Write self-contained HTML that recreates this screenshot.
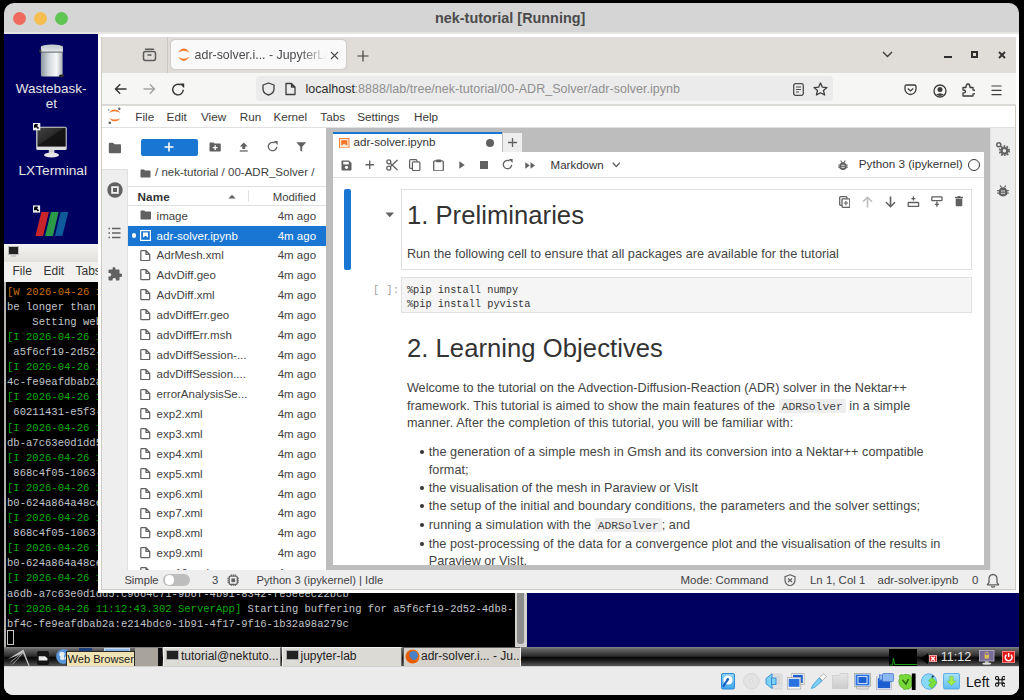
<!DOCTYPE html><html><head><meta charset="utf-8"><style>
html,body{margin:0;padding:0;width:1024px;height:700px;overflow:hidden;background:#000;}
body div, body span, body svg{position:absolute;box-sizing:border-box;}
span{white-space:pre;}
</style></head><body>
<div style="left:4px;top:3px;width:1015px;height:692px;background:#d5d5d5;border-radius:10px 10px 9px 9px;"></div>
<div style="left:12.5px;top:12px;width:13px;height:13px;background:#ee6a5f;border-radius:50%;"></div>
<div style="left:33.5px;top:12px;width:13px;height:13px;background:#f5bf4f;border-radius:50%;"></div>
<div style="left:54.5px;top:12px;width:13px;height:13px;background:#61c554;border-radius:50%;"></div>
<span style="left:435px;top:9px;font-family:'Liberation Sans';font-size:14.4px;line-height:18px;color:#4b4b4b;font-weight:bold;letter-spacing:0px;">nek-tutorial [Running]</span>
<div style="left:4px;top:32px;width:1015px;height:2px;background:#e7e5e0;"></div>
<div style="left:4px;top:33.5px;width:1015px;height:614px;background:#000060;"></div>
<div style="left:4px;top:666px;width:1015px;height:29px;background:#ebebeb;border-radius:0 0 9px 9px;"></div>
<svg style="left:38px;top:43px;" width="28" height="35" viewBox="0 0 28 35"><defs><linearGradient id="wb" x1="0" x2="1"><stop offset="0" stop-color="#8c969d"/><stop offset="0.35" stop-color="#d0d6da"/><stop offset="0.72" stop-color="#f7f8f9"/><stop offset="1" stop-color="#a9b1b6"/></linearGradient>
    <linearGradient id="wl" x1="0" y1="0" x2="0" y2="1"><stop offset="0" stop-color="#c4ccd1"/><stop offset="1" stop-color="#e6eaed"/></linearGradient></defs>
    <rect x="2.9" y="8" width="21.7" height="25.6" rx="1.5" fill="url(#wb)"/>
    <ellipse cx="13.9" cy="3.6" rx="11" ry="2" fill="#c8d0d5"/>
    <rect x="2.9" y="3.6" width="22" height="5.6" fill="url(#wl)"/>
    <rect x="2.9" y="8.6" width="22" height="1" fill="#5a6268"/>
    <rect x="1.3" y="6.6" width="2" height="2.8" fill="#3a3a3a"/>
    <ellipse cx="23.6" cy="32.9" rx="2.8" ry="1.3" fill="#2a2a2a"/></svg>
<span style="left:15.8px;top:80px;font-family:'Liberation Sans';font-size:13.5px;line-height:17px;color:#e6e6e6;font-weight:normal;letter-spacing:0px;">Wastebask-</span>
<span style="left:45.7px;top:95px;font-family:'Liberation Sans';font-size:13.5px;line-height:17px;color:#e6e6e6;font-weight:normal;letter-spacing:0px;">et</span>
<svg style="left:33px;top:122px;" width="36" height="37" viewBox="0 0 36 37"><defs><linearGradient id="mg" x1="0" y1="0" x2="1" y2="1"><stop offset="0" stop-color="#444"/><stop offset="0.45" stop-color="#2a2a2a"/><stop offset="0.5" stop-color="#151515"/><stop offset="1" stop-color="#111"/></linearGradient></defs>
    <rect x="3.2" y="4.8" width="30.5" height="23.3" rx="1.5" fill="#dedede"/>
    <rect x="4.4" y="5.7" width="28.3" height="18.9" fill="url(#mg)"/>
    <rect x="15.8" y="28" width="5.6" height="3.3" fill="#cfcfcf"/>
    <ellipse cx="18.5" cy="33" rx="7.5" ry="2.6" fill="#e6e6e6"/>
    <rect x="0" y="1" width="7.3" height="7.3" fill="#eee"/><path d="M2 3 L5.5 6.5 M1.8 2.8 h3 M1.8 2.8 v3" stroke="#000" stroke-width="1.6" fill="none"/></svg>
<span style="left:18.5px;top:162px;font-family:'Liberation Sans';font-size:13.7px;line-height:17px;color:#e6e6e6;font-weight:normal;letter-spacing:0px;">LXTerminal</span>
<svg style="left:33px;top:205px;" width="38" height="33" viewBox="0 0 38 33"><path d="M8.4 7 L15.9 7 L10.1 31 L2.4 31 Z" fill="#c8252a"/>
    <path d="M17.9 7 L25.6 7 L19.9 31 L12.1 31 Z" fill="#2a9a48"/>
    <path d="M27.6 7 L35.3 7 L29.3 31 L21.9 31 Z" fill="#0e5a9a"/>
    <rect x="0" y="0.4" width="7.1" height="7.2" fill="#eee"/><path d="M2 2.4 L5.5 5.9 M1.8 2.2 h3 M1.8 2.2 v3" stroke="#000" stroke-width="1.6" fill="none"/></svg>
<div style="left:4px;top:243.5px;width:523px;height:404px;background:#d6d4d0;"></div>
<div style="left:4px;top:243.5px;width:523px;height:18px;background:linear-gradient(#f4f3f1,#e2e0dc);"></div>
<svg style="left:8px;top:246px;" width="12" height="12" viewBox="0 0 12 12"><rect x="0.5" y="0.5" width="10" height="8" fill="#222" stroke="#bbb"/><rect x="3" y="9" width="5" height="2" fill="#ccc"/></svg>
<div style="left:4px;top:261.5px;width:523px;height:20.5px;background:#f2f1f0;"></div>
<span style="left:12.5px;top:264px;font-family:'Liberation Sans';font-size:12px;line-height:15px;color:#333;font-weight:normal;letter-spacing:0px;">File</span>
<span style="left:43.5px;top:264px;font-family:'Liberation Sans';font-size:12px;line-height:15px;color:#333;font-weight:normal;letter-spacing:0px;">Edit</span>
<span style="left:75.5px;top:264px;font-family:'Liberation Sans';font-size:12px;line-height:15px;color:#333;font-weight:normal;letter-spacing:0px;">Tabs</span>
<div style="left:4px;top:282px;width:2.2px;height:365px;background:#b4b2ae;"></div>
<div style="left:6px;top:282px;width:509px;height:364.5px;background:#000;"></div>
<div style="left:515px;top:282px;width:12px;height:364.5px;background:#d4d2ce;"></div>
<div style="left:517px;top:560px;width:7px;height:84px;background:#8c8c8c;border-radius:3px;"></div>
<span style="left:7px;top:286px;font-family:'Liberation Mono';font-size:10.53px;line-height:13px;color:#c2c6ca;font-weight:normal;letter-spacing:0.02px;"><span style="position:static;color:#c46e0c">[W 2026-04-26 11:12:40.001 ServerApp]</span></span>
<span style="left:7px;top:301px;font-family:'Liberation Mono';font-size:10.53px;line-height:13px;color:#c2c6ca;font-weight:normal;letter-spacing:0.02px;"><span style="position:static;color:#c2c6ca">be longer than 60 seconds</span></span>
<span style="left:7px;top:316px;font-family:'Liberation Mono';font-size:10.53px;line-height:13px;color:#c2c6ca;font-weight:normal;letter-spacing:0.02px;"><span style="position:static;color:#c2c6ca">    Setting websocket_ping_interval</span></span>
<span style="left:7px;top:331px;font-family:'Liberation Mono';font-size:10.53px;line-height:13px;color:#c2c6ca;font-weight:normal;letter-spacing:0.02px;"><span style="position:static;color:#08ac08">[I 2026-04-26 11:12:4</span></span>
<span style="left:7px;top:346px;font-family:'Liberation Mono';font-size:10.53px;line-height:13px;color:#c2c6ca;font-weight:normal;letter-spacing:0.02px;"><span style="position:static;color:#c2c6ca"> a5f6cf19-2d52-4db8-bf4c</span></span>
<span style="left:7px;top:361px;font-family:'Liberation Mono';font-size:10.53px;line-height:13px;color:#c2c6ca;font-weight:normal;letter-spacing:0.02px;"><span style="position:static;color:#08ac08">[I 2026-04-26 11:12:4</span></span>
<span style="left:7px;top:376px;font-family:'Liberation Mono';font-size:10.53px;line-height:13px;color:#c2c6ca;font-weight:normal;letter-spacing:0.02px;"><span style="position:static;color:#c2c6ca">4c-fe9eafdbab2a:e214bdc0</span></span>
<span style="left:7px;top:391px;font-family:'Liberation Mono';font-size:10.53px;line-height:13px;color:#c2c6ca;font-weight:normal;letter-spacing:0.02px;"><span style="position:static;color:#08ac08">[I 2026-04-26 11:12:4</span></span>
<span style="left:7px;top:406px;font-family:'Liberation Mono';font-size:10.53px;line-height:13px;color:#c2c6ca;font-weight:normal;letter-spacing:0.02px;"><span style="position:static;color:#c2c6ca"> 60211431-e5f3-4b7a-9c2d</span></span>
<span style="left:7px;top:422px;font-family:'Liberation Mono';font-size:10.53px;line-height:13px;color:#c2c6ca;font-weight:normal;letter-spacing:0.02px;"><span style="position:static;color:#08ac08">[I 2026-04-26 11:12:4</span></span>
<span style="left:7px;top:437px;font-family:'Liberation Mono';font-size:10.53px;line-height:13px;color:#c2c6ca;font-weight:normal;letter-spacing:0.02px;"><span style="position:static;color:#c2c6ca">db-a7c63e0d1dd5:c9664c71</span></span>
<span style="left:7px;top:452px;font-family:'Liberation Mono';font-size:10.53px;line-height:13px;color:#c2c6ca;font-weight:normal;letter-spacing:0.02px;"><span style="position:static;color:#08ac08">[I 2026-04-26 11:12:4</span></span>
<span style="left:7px;top:467px;font-family:'Liberation Mono';font-size:10.53px;line-height:13px;color:#c2c6ca;font-weight:normal;letter-spacing:0.02px;"><span style="position:static;color:#c2c6ca"> 868c4f05-1063-4e2b-a1f0</span></span>
<span style="left:7px;top:482px;font-family:'Liberation Mono';font-size:10.53px;line-height:13px;color:#c2c6ca;font-weight:normal;letter-spacing:0.02px;"><span style="position:static;color:#08ac08">[I 2026-04-26 11:12:4</span></span>
<span style="left:7px;top:497px;font-family:'Liberation Mono';font-size:10.53px;line-height:13px;color:#c2c6ca;font-weight:normal;letter-spacing:0.02px;"><span style="position:static;color:#c2c6ca">b0-624a864a48ce:8e0c2f11</span></span>
<span style="left:7px;top:512px;font-family:'Liberation Mono';font-size:10.53px;line-height:13px;color:#c2c6ca;font-weight:normal;letter-spacing:0.02px;"><span style="position:static;color:#08ac08">[I 2026-04-26 11:12:4</span></span>
<span style="left:7px;top:527px;font-family:'Liberation Mono';font-size:10.53px;line-height:13px;color:#c2c6ca;font-weight:normal;letter-spacing:0.02px;"><span style="position:static;color:#c2c6ca"> 868c4f05-1063-4e2b-a1f0</span></span>
<span style="left:7px;top:542px;font-family:'Liberation Mono';font-size:10.53px;line-height:13px;color:#c2c6ca;font-weight:normal;letter-spacing:0.02px;"><span style="position:static;color:#08ac08">[I 2026-04-26 11:12:4</span></span>
<span style="left:7px;top:557px;font-family:'Liberation Mono';font-size:10.53px;line-height:13px;color:#c2c6ca;font-weight:normal;letter-spacing:0.02px;"><span style="position:static;color:#c2c6ca">b0-624a864a48ce:8e0c2f11</span></span>
<span style="left:7px;top:572px;font-family:'Liberation Mono';font-size:10.53px;line-height:13px;color:#c2c6ca;font-weight:normal;letter-spacing:0.02px;"><span style="position:static;color:#08ac08">[I 2026-04-26 11:12:4</span></span>
<span style="left:7px;top:588px;font-family:'Liberation Mono';font-size:10.53px;line-height:13px;color:#c2c6ca;font-weight:normal;letter-spacing:0.02px;"><span style="position:static;color:#c2c6ca">a6db-a7c63e0d1dd5:c9664c71-9b6f-4b91-8342-fe5eeec22bcb</span></span>
<span style="left:7px;top:603px;font-family:'Liberation Mono';font-size:10.53px;line-height:13px;color:#c2c6ca;font-weight:normal;letter-spacing:0.02px;"><span style="position:static;color:#08ac08">[I 2026-04-26 11:12:43.302 ServerApp]</span><span style="position:static;color:#c2c6ca"> Starting buffering for a5f6cf19-2d52-4db8-</span></span>
<span style="left:7px;top:618px;font-family:'Liberation Mono';font-size:10.53px;line-height:13px;color:#c2c6ca;font-weight:normal;letter-spacing:0.02px;"><span style="position:static;color:#c2c6ca">bf4c-fe9eafdbab2a:e214bdc0-1b91-4f17-9f16-1b32a98a279c</span></span>
<div style="left:6.5px;top:629.5px;width:7px;height:15.5px;border:1px solid #c8c8c8;"></div>
<div style="left:4px;top:647.3px;width:1015px;height:19.7px;background:linear-gradient(#858585 0%,#626262 12%,#2c2c2c 45%,#080808 53%,#1c1c1c 68%,#4c4c4c 90%,#5c5c5c 100%);"></div>
<svg style="left:4px;top:647px;" width="30" height="20" viewBox="0 0 30 20"><path d="M19.4 2.5 L25.8 19.3 L24.6 19.3 L19 6 Q12 9 3.9 12.2 Q12 7 19.4 2.5Z" fill="#c4c4c4"/><path d="M19 5 Q12 11 6.5 15 M19.2 5.5 Q13 13 8.4 17.4" stroke="#a8a8a8" stroke-width="0.9" fill="none"/></svg>
<svg style="left:36.5px;top:650.7px;" width="12" height="14" viewBox="0 0 12 14"><rect x="0" y="0" width="12" height="14" rx="2" fill="#141414"/><path d="M1.7 5.3 H8 L10.4 7.3 V9.5 H1.7Z" fill="#e8e8e8"/></svg>
<svg style="left:55.5px;top:649.3px;" width="15" height="15" viewBox="0 0 15 15"><circle cx="7.5" cy="7.5" r="7.4" fill="#5a95d8"/><path d="M4 3 Q8 2 9 5 Q7 7 9 10 Q6 12 4 10 Q5 7 3 6Z" fill="#e4eef8"/><circle cx="11" cy="9" r="2" fill="#dfe9f5"/></svg>
<div style="left:135px;top:647.5px;width:23px;height:19px;background:#a8a49c;"></div>
<div style="left:79px;top:647.5px;width:12.5px;height:5px;background:#1d3f7a;"></div>
<div style="left:104px;top:647.5px;width:26px;height:5px;background:#8fb4e3;border:1px solid #c6dbf3;"></div>
<div style="left:65.7px;top:651.3px;width:69.6px;height:15.7px;background:#f0e4b4;border:1px solid #2a2a2a;"></div>
<span style="left:67.5px;top:652px;font-family:'Liberation Sans';font-size:11.1px;line-height:14px;color:#1a1a1a;font-weight:normal;letter-spacing:0px;">Web Browser</span>
<div style="left:158px;top:648px;width:4px;height:18px;background:#111;"></div>
<div style="left:162.5px;top:647px;width:118.5px;height:19.5px;background:#dcdad5;border:1px solid #f2f1ef;border-right-color:#6f6d69;border-bottom-color:#8a8884;"></div>
<svg style="left:166.0px;top:650px;" width="13" height="14" viewBox="0 0 13 14"><rect x="0.5" y="0.5" width="12" height="9" fill="#222" stroke="#aaa"/><rect x="4" y="10" width="5" height="3" fill="#ddd"/></svg>
<span style="left:181.0px;top:649px;font-family:'Liberation Sans';font-size:12px;line-height:15px;color:#222;font-weight:normal;letter-spacing:0px;">tutorial@nektuto...</span>
<div style="left:282px;top:647px;width:119.5px;height:19.5px;background:#dcdad5;border:1px solid #f2f1ef;border-right-color:#6f6d69;border-bottom-color:#8a8884;"></div>
<svg style="left:285.5px;top:650px;" width="13" height="14" viewBox="0 0 13 14"><rect x="0.5" y="0.5" width="12" height="9" fill="#222" stroke="#aaa"/><rect x="4" y="10" width="5" height="3" fill="#ddd"/></svg>
<span style="left:300.5px;top:649px;font-family:'Liberation Sans';font-size:12px;line-height:15px;color:#222;font-weight:normal;letter-spacing:0px;">jupyter-lab</span>
<div style="left:402.5px;top:647px;width:118.5px;height:19.5px;background:#d5d2cc;border:1px solid #5f5d59;border-right-color:#f2f1ef;border-bottom-color:#f2f1ef;"></div>
<svg style="left:404.5px;top:649px;" width="15" height="15" viewBox="0 0 15 15"><circle cx="7.5" cy="7.5" r="7" fill="#e8700a"/><circle cx="8.3" cy="6.6" r="4.6" fill="#4a80c8"/><path d="M2 6 Q3 1.5 7 1 Q4 3 4.5 6 Q5 10 9 11.5 Q12 12 14 9.5 Q12.5 14 7.5 14.2 Q2.5 14 1.2 9 Z" fill="#e65a00"/></svg>
<span style="left:421.0px;top:649px;font-family:'Liberation Sans';font-size:12px;line-height:15px;color:#222;font-weight:normal;letter-spacing:0px;">adr-solver.i... - Ju...</span>
<div style="left:888.6px;top:649px;width:28.4px;height:17px;background:#000;"></div>
<svg style="left:888.6px;top:649px;" width="28.4" height="17" viewBox="0 0 28.4 17"><path d="M0.5 16 H3.5 L4.5 9 L5.5 15.5 H28" stroke="#1aa01a" fill="none" stroke-width="1"/></svg>
<svg style="left:920px;top:653px;" width="8.5" height="11.5" viewBox="0 0 8.5 11.5"><path d="M8 0.3 L0.3 5.75 L8 11.2Z" fill="#000"/></svg>
<div style="left:928.5px;top:654.6px;width:8px;height:7.4px;background:#d42020;border:0.5px solid #f0a0a0;"></div>
<svg style="left:928.5px;top:654.6px;" width="8" height="7.4" viewBox="0 0 8 7.4"><path d="M2.2 1.8 L5.8 5.6 M5.8 1.8 L2.2 5.6" stroke="#fff" stroke-width="1.4"/></svg>
<span style="left:940.8px;top:649px;font-family:'Liberation Sans';font-size:12.6px;line-height:16px;color:#e4e4e4;font-weight:normal;letter-spacing:0px;">11:12</span>
<svg style="left:979px;top:650px;" width="15.5" height="15" viewBox="0 0 15.5 15"><rect x="0.5" y="0.5" width="14.5" height="10.5" fill="#7a6a98" stroke="#b8b8c8" stroke-width="0.8"/><rect x="6" y="11.3" width="3.5" height="1.5" fill="#ccc"/><ellipse cx="7.75" cy="13.6" rx="4.5" ry="1.2" fill="#e0e0e0"/><path d="M6.2 5 V3.8 A1.55 1.55 0 0 1 9.3 3.8 V5" stroke="#d8c060" stroke-width="0.9" fill="none"/><rect x="5.6" y="5" width="4.3" height="3.6" fill="#e0c050"/></svg>
<div style="left:1001.5px;top:651.3px;width:13.3px;height:12px;background:#e01818;border:0.5px solid #ff8080;"></div>
<svg style="left:1001.5px;top:651.3px;" width="13.3" height="12" viewBox="0 0 13.3 12"><path d="M4.4 3.8 A3.4 3.4 0 1 0 8.9 3.8" stroke="#fff" stroke-width="1.5" fill="none"/><path d="M6.65 2 V6" stroke="#fff" stroke-width="1.5"/></svg>
<div style="left:4px;top:666px;width:1015px;height:1px;background:#d0d0d0;"></div>
<svg style="left:721px;top:673px;" width="14" height="16.5" viewBox="0 0 14 16.5"><defs><linearGradient id="hd" x1="0" y1="0" x2="0" y2="1"><stop offset="0" stop-color="#8fd3f7"/><stop offset="1" stop-color="#3ea6ea"/></linearGradient></defs><rect x="0.5" y="0.5" width="13" height="15.5" rx="1.5" fill="url(#hd)" stroke="#2f8ad8"/><circle cx="7" cy="7" r="4.6" fill="#fff"/><circle cx="6.8" cy="6.2" r="1.3" fill="#1a5fc0"/><path d="M6.5 7 L2.5 13" stroke="#1a5fc0" stroke-width="2.2" stroke-linecap="round"/></svg>
<svg style="left:743px;top:673px;" width="17" height="16.5" viewBox="0 0 17 16.5"><circle cx="8.4" cy="8.25" r="7.9" fill="#e2e2e2" stroke="#cfcfcf" stroke-width="0.6"/><circle cx="8.4" cy="8.25" r="1.3" fill="#f4f4f4" stroke="#c4c4c4" stroke-width="0.5"/></svg>
<svg style="left:765px;top:673px;" width="18" height="16.5" viewBox="0 0 18 16.5"><rect x="7.5" y="1" width="9.5" height="15" fill="#e0e0e0" stroke="#c8c8c8" stroke-width="0.6"/><path d="M12 4 H15 M12 7 H15 M12 10 H15" stroke="#b8b8b8" stroke-width="0.7"/><path d="M1 5.5 L7 0.8 V15.5 L1 10.8 Z" fill="#7fd0f8" stroke="#2f8ad8" stroke-width="0.9"/><rect x="6.5" y="5" width="4.5" height="6.5" fill="#7fd0f8" stroke="#2f8ad8" stroke-width="0.9"/></svg>
<svg style="left:787px;top:673px;" width="18" height="16.5" viewBox="0 0 18 16.5"><rect x="4.8" y="0.5" width="12.3" height="11" fill="#fff" stroke="#aaa" stroke-width="0.8"/><rect x="6" y="1.8" width="9.8" height="8.2" fill="#1d5fd0"/><rect x="0.5" y="4.5" width="13.2" height="11.5" fill="#fff" stroke="#aaa" stroke-width="0.8"/><rect x="1.7" y="5.8" width="10.8" height="8" fill="#2a72e0"/></svg>
<svg style="left:810px;top:673px;" width="17" height="16.5" viewBox="0 0 17 16.5"><path d="M1.3 15.5 L2.5 12.5 L9 5 L12 8 L4.5 14.5 Z" fill="#7ccff5" stroke="#3a9ae0" stroke-width="0.8" stroke-linejoin="round"/><path d="M9.5 4.5 L13.5 0.8 L16.2 3.5 L12.5 7.5 Z" fill="#fff" stroke="#999" stroke-width="0.8"/></svg>
<svg style="left:832px;top:673px;" width="17" height="16" viewBox="0 0 17 16"><defs><linearGradient id="fo" x1="0" y1="0" x2="0" y2="1"><stop offset="0" stop-color="#e6e6e6"/><stop offset="1" stop-color="#cccccc"/></linearGradient></defs><path d="M7 2.5 L8.5 0.5 H16 V15.5 H0.5 V2.5 Z" fill="url(#fo)" stroke="#c4c4c4" stroke-width="0.6"/></svg>
<svg style="left:854px;top:673px;" width="17" height="16.5" viewBox="0 0 17 16.5"><rect x="0.5" y="0.5" width="16" height="13" fill="#fff" stroke="#999" stroke-width="0.7"/><rect x="1.5" y="1.5" width="14" height="11" fill="#2a72e0"/><rect x="3.5" y="3" width="10" height="8" fill="#cfe0f7"/><rect x="4.5" y="4" width="8" height="6" fill="#1d5fd0"/><path d="M2 13.8 H15 L14 16 H3 Z" fill="#e8e8e8" stroke="#999" stroke-width="0.6"/></svg>
<svg style="left:876px;top:673px;" width="18" height="16.5" viewBox="0 0 18 16.5"><rect x="0.5" y="4" width="15" height="12.3" fill="#fff" stroke="#aaa" stroke-width="0.7"/><rect x="1.7" y="5.2" width="12.6" height="10" fill="#1d5fd0"/><rect x="6.5" y="0.5" width="11" height="8" rx="1" fill="#8ab8f5" stroke="#4a78d0" stroke-width="0.8"/><path d="M6.5 2.5 L3.5 1.5 V7.5 L6.5 6.5 Z" fill="#8ab8f5" stroke="#4a78d0" stroke-width="0.8"/></svg>
<svg style="left:898px;top:672.5px;" width="18" height="17.5" viewBox="0 0 18 17.5"><path d="M1 3 Q3 0.5 5 2 Q8 0.5 12 2 L13.5 4 V14 Q11 17 8 16 L6 17 L5 15 Q1.5 14 1 10 Q0 7 2 5 Z" fill="#78d838" stroke="#4aa81c" stroke-width="0.6"/><path d="M4.5 7 L8 11 L10.5 6" stroke="#2a6a10" stroke-width="1.6" fill="none"/><rect x="13.8" y="0.5" width="3.8" height="17" fill="#000"/></svg>
<svg style="left:921px;top:673px;" width="17" height="16.5" viewBox="0 0 17 16.5"><ellipse cx="8" cy="8.5" rx="7.5" ry="7.8" transform="rotate(-30 8 8.5)" fill="#8ad8f8" stroke="#4aa0e0" stroke-width="0.7"/><path d="M7.5 8 L11 4.5 L16 9.5 L11 15.5 L7.5 12 L10.5 9.5 Z" fill="#7be03a" stroke="#4aa81c" stroke-width="0.5"/><circle cx="11.7" cy="3.5" r="1.1" fill="#0a1a50"/></svg>
<svg style="left:943px;top:673px;" width="17" height="16.5" viewBox="0 0 17 16.5"><defs><linearGradient id="dl" x1="0" y1="0" x2="0" y2="1"><stop offset="0" stop-color="#a8e2fa"/><stop offset="1" stop-color="#62bdf2"/></linearGradient></defs><rect x="0.5" y="0.5" width="16" height="15.5" rx="1.5" fill="url(#dl)" stroke="#4aa0e0" stroke-width="0.8"/><path d="M6.8 3.5 H10.2 V8 H13 L8.5 12.5 L4 8 H6.8 Z" fill="#a4ee4a" stroke="#6ab82a" stroke-width="0.5"/></svg>
<span style="left:965.9px;top:673px;font-family:'Liberation Sans';font-size:14px;line-height:18px;color:#111;font-weight:normal;letter-spacing:0.0852px;">Left</span>
<svg style="left:994.7px;top:676.4px;" width="10.8" height="10.8" viewBox="0 0 10.8 10.8"><g stroke="#161616" stroke-width="1.05" fill="none"><path d="M1.9 3.7 H8.9 M1.9 7.1 H8.9 M3.7 1.9 V8.9 M7.1 1.9 V8.9"/><circle cx="2.05" cy="2.05" r="1.6"/><circle cx="8.75" cy="2.05" r="1.6"/><circle cx="2.05" cy="8.75" r="1.6"/><circle cx="8.75" cy="8.75" r="1.6"/></g></svg>
<div style="left:98px;top:34px;width:921px;height:558.6px;background:#fff;"></div>
<div style="left:101.3px;top:36.6px;width:914.7px;height:553px;background:#cfcac4;"></div>
<div style="left:102px;top:37px;width:914px;height:35.5px;background:#e0ddd9;"></div>
<div style="left:167.2px;top:37px;width:1px;height:35.5px;background:#cbc7c2;"></div>
<svg style="left:142px;top:47px;" width="15" height="15" viewBox="0 0 15 15"><path d="M3.5 2.2 H11.5" stroke="#5b5b5b" stroke-width="1.5" stroke-linecap="round"/><rect x="1.5" y="4.6" width="12" height="9" rx="2" fill="none" stroke="#5b5b5b" stroke-width="1.5"/><path d="M6 8 H9" stroke="#5b5b5b" stroke-width="1.5" stroke-linecap="round"/></svg>
<div style="left:171px;top:40.3px;width:175px;height:29px;background:#f9f9f9;border-radius:4px;box-shadow:0 0 1.5px rgba(0,0,0,0.35);"></div>
<svg style="left:177.5px;top:48px;" width="12" height="14" viewBox="0 0 12 14"><path d="M0.1 4.6 Q5.8 -3.6 11.5 4.6 Q5.8 0.8 0.1 4.6Z" fill="#f37726"/><path d="M0.1 8.8 Q5.8 17 11.5 8.8 Q5.8 12.6 0.1 8.8Z" fill="#f37726"/></svg>
<span style="left:194.6px;top:47px;font-family:'Liberation Sans';font-size:12.4px;line-height:16px;color:#4a4a4f;font-weight:normal;letter-spacing:0px;width:132px;overflow:hidden;-webkit-mask-image:linear-gradient(90deg,#000 80%,transparent 100%);">adr-solver.i... - JupyterLab</span>
<svg style="left:329.5px;top:51px;" width="9" height="9" viewBox="0 0 9 9"><path d="M1 1 L8 8 M8 1 L1 8" stroke="#4a4a4f" stroke-width="1.1"/></svg>
<svg style="left:357px;top:49.5px;" width="12" height="12" viewBox="0 0 12 12"><path d="M6 0.5 V11.5 M0.5 6 H11.5" stroke="#3d3d3d" stroke-width="1.15"/></svg>
<svg style="left:881.5px;top:51px;" width="11" height="7" viewBox="0 0 11 7"><path d="M1 1 L5.5 5.5 L10 1" stroke="#3d3d3d" stroke-width="1.4" fill="none"/></svg>
<div style="left:944px;top:55.5px;width:8px;height:2px;background:#2e2e2e;"></div>
<div style="left:971px;top:51px;width:7.2px;height:7.2px;border:2px solid #2e2e2e;"></div>
<svg style="left:998px;top:51px;" width="8" height="8" viewBox="0 0 8 8"><path d="M1 1 L7 7 M7 1 L1 7" stroke="#2e2e2e" stroke-width="1.8"/></svg>
<div style="left:102px;top:72.5px;width:914px;height:33px;background:#f6f6f5;"></div>
<div style="left:102px;top:104.4px;width:914px;height:1.2px;background:#dcdad7;"></div>
<svg style="left:114px;top:83px;" width="13" height="12" viewBox="0 0 13 12"><path d="M12.5 6 H1.5 M6.2 1.3 L1.5 6 L6.2 10.7" stroke="#333" stroke-width="1.4" fill="none"/></svg>
<svg style="left:143px;top:83px;" width="13" height="12" viewBox="0 0 13 12"><path d="M0.5 6 H11.5 M6.8 1.3 L11.5 6 L6.8 10.7" stroke="#a4a4a4" stroke-width="1.4" fill="none"/></svg>
<svg style="left:171px;top:82.5px;" width="14" height="13" viewBox="0 0 14 13"><path d="M12.3 6.8 A5.3 5.3 0 1 1 9.6 1.9" stroke="#333" stroke-width="1.4" fill="none"/><path d="M8.6 0.6 L13.2 0.6 L13.2 5.2 Z" fill="#333"/></svg>
<div style="left:256px;top:76.2px;width:577px;height:25px;background:#ebebeb;border-radius:4px;"></div>
<svg style="left:261.5px;top:82px;" width="13" height="14" viewBox="0 0 13 14"><path d="M6.5 1 L12 3 V7 C12 10 9.5 12.2 6.5 13 C3.5 12.2 1 10 1 7 V3 Z" stroke="#3d3d3d" stroke-width="1.3" fill="none" stroke-linejoin="round"/></svg>
<svg style="left:284.5px;top:82px;" width="11" height="14" viewBox="0 0 11 14"><path d="M1 1.5 H6.5 L10 5 V12.5 H1 Z M6.5 1.5 V5 H10" stroke="#3d3d3d" stroke-width="1.3" fill="none" stroke-linejoin="round"/></svg>
<span style="left:305.6px;top:81px;font-family:'Liberation Sans';font-size:12.5px;line-height:16px;color:#2b2b2b;font-weight:normal;letter-spacing:0px;">localhost</span>
<span style="left:354.5px;top:81px;font-family:'Liberation Sans';font-size:12.5px;line-height:16px;color:#8f8f8f;font-weight:normal;letter-spacing:0.0296px;">:8888/lab/tree/nek-tutorial/00-ADR_Solver/adr-solver.ipynb</span>
<svg style="left:792.5px;top:83px;" width="11" height="13" viewBox="0 0 11 13"><rect x="0.7" y="0.7" width="9.6" height="11.6" rx="1.8" stroke="#4a4a4a" stroke-width="1.3" fill="none"/><path d="M3 4 H8 M3 6.5 H8 M3 9 H6" stroke="#4a4a4a" stroke-width="1.1"/></svg>
<svg style="left:813px;top:82px;" width="15" height="14" viewBox="0 0 15 14"><path d="M7.5 1 L9.4 5.2 L14 5.6 L10.5 8.6 L11.6 13 L7.5 10.7 L3.4 13 L4.5 8.6 L1 5.6 L5.6 5.2 Z" stroke="#3d3d3d" stroke-width="1.3" fill="none" stroke-linejoin="round"/></svg>
<svg style="left:904px;top:84px;" width="13" height="12" viewBox="0 0 13 12"><path d="M1 2.5 Q1 1 2.5 1 H10.5 Q12 1 12 2.5 V5 A5.5 5.5 0 0 1 1 5 Z" stroke="#3d3d3d" stroke-width="1.3" fill="none"/><path d="M3.8 4.6 L6.5 7 L9.2 4.6" stroke="#3d3d3d" stroke-width="1.3" fill="none"/></svg>
<svg style="left:932.5px;top:83.5px;" width="14" height="14" viewBox="0 0 14 14"><circle cx="7" cy="7" r="6" stroke="#3d3d3d" stroke-width="1.3" fill="none"/><circle cx="7" cy="5.4" r="2.5" fill="#3d3d3d"/><path d="M3 10.8 Q7 7.6 11 10.8 Q7 13 3 10.8Z" fill="#3d3d3d"/></svg>
<svg style="left:962px;top:83px;" width="13" height="14" viewBox="0 0 13 14"><path d="M1 4.5 H4 Q4 1 6 1 Q8 1 8 4.5 H11 V7 Q14 7 14 9 Q14 11 11 11 V13 H1 V10 Q3.5 10 3.5 8.5 Q3.5 7 1 7 Z" stroke="#3d3d3d" stroke-width="1.3" fill="none" stroke-linejoin="round"/></svg>
<svg style="left:990.5px;top:84.5px;" width="11" height="11" viewBox="0 0 11 11"><path d="M0.5 1 H10.5 M0.5 5.3 H10.5 M0.5 9.6 H10.5" stroke="#3d3d3d" stroke-width="1.15"/></svg>
<div style="left:102px;top:105.6px;width:913px;height:22.4px;background:#fff;"></div>
<div style="left:102px;top:126.7px;width:913px;height:1.2px;background:#e0e0e0;"></div>
<svg style="left:107px;top:107px;" width="15" height="17" viewBox="0 0 15 17"><path d="M1.7 6 Q7.7 -0.8 13.7 6 Q7.7 2.6 1.7 6Z" fill="#f37726"/><path d="M1.7 10.9 Q7.7 17.7 13.7 10.9 Q7.7 14.3 1.7 10.9Z" fill="#f37726"/><circle cx="12.3" cy="1.8" r="1.2" fill="#616262"/><circle cx="2.8" cy="15.9" r="1.3" fill="#616262"/><circle cx="1.7" cy="2.9" r="0.9" fill="#9e9e9e"/></svg>
<span style="left:135.3px;top:109px;font-family:'Liberation Sans';font-size:11.7px;line-height:15px;color:#3a3a3a;font-weight:normal;letter-spacing:0px;">File</span>
<span style="left:166.6px;top:109px;font-family:'Liberation Sans';font-size:11.7px;line-height:15px;color:#3a3a3a;font-weight:normal;letter-spacing:0px;">Edit</span>
<span style="left:201px;top:109px;font-family:'Liberation Sans';font-size:11.7px;line-height:15px;color:#3a3a3a;font-weight:normal;letter-spacing:0px;">View</span>
<span style="left:239.7px;top:109px;font-family:'Liberation Sans';font-size:11.7px;line-height:15px;color:#3a3a3a;font-weight:normal;letter-spacing:0px;">Run</span>
<span style="left:273.4px;top:109px;font-family:'Liberation Sans';font-size:11.7px;line-height:15px;color:#3a3a3a;font-weight:normal;letter-spacing:0px;">Kernel</span>
<span style="left:320.3px;top:109px;font-family:'Liberation Sans';font-size:11.7px;line-height:15px;color:#3a3a3a;font-weight:normal;letter-spacing:0px;">Tabs</span>
<span style="left:357.2px;top:109px;font-family:'Liberation Sans';font-size:11.7px;line-height:15px;color:#3a3a3a;font-weight:normal;letter-spacing:0px;">Settings</span>
<span style="left:414px;top:109px;font-family:'Liberation Sans';font-size:11.7px;line-height:15px;color:#3a3a3a;font-weight:normal;letter-spacing:0px;">Help</span>
<div style="left:102px;top:128px;width:913px;height:442px;background:#bdbdbd;"></div>
<div style="left:102px;top:128px;width:26px;height:442px;background:#eeeeee;"></div>
<div style="left:102px;top:128px;width:26px;height:41.5px;background:#fff;"></div>
<div style="left:127.4px;top:169px;width:0.8px;height:401px;background:#e0e0e0;"></div>
<div style="left:102px;top:169px;width:26px;height:0.8px;background:#e0e0e0;"></div>
<svg style="left:107.5px;top:142px;" width="14" height="12" viewBox="0 0 14 12"><path d="M0.8 1.8 Q0.8 0.8 1.8 0.8 H5 L6.5 2.3 H12 Q13 2.3 13 3.3 V10.5 Q13 11.3 12 11.3 H1.8 Q0.8 11.3 0.8 10.3 Z" fill="#616161"/></svg>
<svg style="left:106.5px;top:182px;" width="16" height="16" viewBox="0 0 16 16"><circle cx="8" cy="8" r="7.7" fill="#616161"/><rect x="4.2" y="4.2" width="7.6" height="7.6" fill="#eee"/><rect x="6" y="6" width="4" height="4" fill="#616161"/></svg>
<svg style="left:108px;top:226.5px;" width="13" height="12" viewBox="0 0 13 12"><path d="M0.5 1.5 H2 M4 1.5 H12.5 M0.5 6 H2 M4 6 H12.5 M0.5 10.5 H2 M4 10.5 H12.5" stroke="#616161" stroke-width="1.4"/></svg>
<svg style="left:107.5px;top:266.5px;" width="14" height="14" viewBox="0 0 14 14"><path d="M12.5 6.5 H11.5 V3.5 Q11.5 2.5 10.5 2.5 H7.5 V1.5 A1.5 1.5 0 0 0 4.5 1.5 V2.5 H1.5 Q0.5 2.5 0.5 3.5 V6 H1.5 A1.8 1.8 0 0 1 1.5 9.6 H0.5 V12.5 Q0.5 13.5 1.5 13.5 H4.5 V12.5 A1.8 1.8 0 0 1 8 12.5 V13.5 H10.5 Q11.5 13.5 11.5 12.5 V10 H12.5 A1.75 1.75 0 0 0 12.5 6.5 Z" fill="#616161"/></svg>
<div style="left:128.2px;top:128px;width:198px;height:442px;background:#fff;"></div>
<div style="left:140.5px;top:139px;width:57.2px;height:16.5px;background:#1976d2;border-radius:2px;"></div>
<svg style="left:163px;top:141px;" width="12" height="12" viewBox="0 0 12 12"><path d="M6 1.5 V10.5 M1.5 6 H10.5" stroke="#fff" stroke-width="1.6"/></svg>
<svg style="left:209px;top:142px;" width="12.5" height="10" viewBox="0 0 12.5 10"><path d="M0.5 1.3 Q0.5 0.5 1.3 0.5 H4.5 L5.6 1.6 H11 Q11.8 1.6 11.8 2.4 V8.7 Q11.8 9.5 11 9.5 H1.3 Q0.5 9.5 0.5 8.7 Z" fill="#616161"/><path d="M6.2 3.2 V8 M3.8 5.6 H8.6" stroke="#fff" stroke-width="1.3"/></svg>
<svg style="left:239px;top:141.5px;" width="9.5" height="10" viewBox="0 0 9.5 10"><path d="M4.75 0.5 L8.7 4.5 H6.2 V7 H3.3 V4.5 H0.8 Z" fill="#616161"/><rect x="0.8" y="8.3" width="7.9" height="1.3" fill="#616161"/></svg>
<svg style="left:267px;top:141px;" width="11" height="11" viewBox="0 0 11 11"><path d="M9.7 5.9 A4.2 4.2 0 1 1 7.6 1.86" stroke="#616161" stroke-width="1.3" fill="none"/><path d="M6.6 0.1 H10.6 V4.1Z" fill="#616161"/></svg>
<svg style="left:295.5px;top:141.5px;" width="10.5" height="10" viewBox="0 0 10.5 10"><path d="M0.3 0.3 H10.2 L6.2 4.8 V9.7 L4.3 8.5 V4.8 Z" fill="#616161"/></svg>
<svg style="left:139.8px;top:168.5px;" width="11" height="9" viewBox="0 0 11 9"><path d="M0.5 1.2 Q0.5 0.5 1.2 0.5 H4 L5 1.5 H9.8 Q10.5 1.5 10.5 2.2 V7.8 Q10.5 8.5 9.8 8.5 H1.2 Q0.5 8.5 0.5 7.8 Z" fill="#616161"/></svg>
<span style="left:155px;top:165px;font-family:'Liberation Sans';font-size:11.5px;line-height:14px;color:#424242;font-weight:normal;letter-spacing:0.0076px;">/ nek-tutorial / 00-ADR_Solver /</span>
<div style="left:128.2px;top:186px;width:198px;height:0.8px;background:#e0e0e0;"></div>
<div style="left:128.2px;top:205px;width:198px;height:1px;background:#e0e0e0;"></div>
<div style="left:247.6px;top:190px;width:0.8px;height:12px;background:#e0e0e0;"></div>
<span style="left:137.5px;top:189px;font-family:'Liberation Sans';font-size:11.7px;line-height:15px;color:#333;font-weight:bold;letter-spacing:0.15px;">Name</span>
<svg style="left:228px;top:193.5px;" width="8" height="5" viewBox="0 0 8 5"><path d="M0.5 4.5 L4 0.8 L7.5 4.5Z" fill="#616161"/></svg>
<span style="left:272.7px;top:190px;font-family:'Liberation Sans';font-size:11.4px;line-height:14px;color:#424242;font-weight:normal;letter-spacing:0px;">Modified</span>
<svg style="left:139.8px;top:210.45px;" width="11.5" height="10" viewBox="0 0 11.5 10"><path d="M0.5 1.3 Q0.5 0.5 1.3 0.5 H4.3 L5.3 1.5 H10.2 Q11 1.5 11 2.3 V8.7 Q11 9.5 10.2 9.5 H1.3 Q0.5 9.5 0.5 8.7 Z" fill="#616161"/></svg>
<span style="left:156.6px;top:209px;font-family:'Liberation Sans';font-size:11.5px;line-height:14px;color:#424242;font-weight:normal;letter-spacing:0px;">image</span>
<span style="left:277.7px;top:209px;font-family:'Liberation Sans';font-size:11.5px;line-height:14px;color:#424242;font-weight:normal;letter-spacing:0px;">4m ago</span>
<div style="left:128.2px;top:225.64px;width:198px;height:20px;background:#1976d2;"></div>
<div style="left:131.7px;top:232.98999999999998px;width:4.6px;height:4.6px;background:#fff;border-radius:50%;"></div>
<svg style="left:140px;top:229.79px;" width="11" height="11" viewBox="0 0 11 11"><rect x="0.6" y="0.6" width="9.8" height="9.8" fill="none" stroke="#fff" stroke-width="1.2"/><path d="M3 2.5 H8 V7.5 L5.5 5.8 L3 7.5Z" fill="#fff"/></svg>
<span style="left:156.6px;top:229px;font-family:'Liberation Sans';font-size:11.5px;line-height:14px;color:#fff;font-weight:normal;letter-spacing:0px;">adr-solver.ipynb</span>
<span style="left:277.7px;top:229px;font-family:'Liberation Sans';font-size:11.5px;line-height:14px;color:#fff;font-weight:normal;letter-spacing:0px;">4m ago</span>
<svg style="left:140px;top:249.63px;" width="10.5" height="11.5" viewBox="0 0 10.5 11.5"><path d="M0.8 1.5 Q0.8 0.7 1.6 0.7 H6 L9.7 4.4 V9.9 Q9.7 10.7 8.9 10.7 H1.6 Q0.8 10.7 0.8 9.9 Z M6 0.7 V4.4 H9.7" stroke="#616161" stroke-width="1.25" fill="none" stroke-linejoin="round"/></svg>
<span style="left:156.6px;top:248px;font-family:'Liberation Sans';font-size:11.5px;line-height:14px;color:#424242;font-weight:normal;letter-spacing:0px;">AdrMesh.xml</span>
<span style="left:277.7px;top:248px;font-family:'Liberation Sans';font-size:11.5px;line-height:14px;color:#424242;font-weight:normal;letter-spacing:0px;">4m ago</span>
<svg style="left:140px;top:269.47px;" width="10.5" height="11.5" viewBox="0 0 10.5 11.5"><path d="M0.8 1.5 Q0.8 0.7 1.6 0.7 H6 L9.7 4.4 V9.9 Q9.7 10.7 8.9 10.7 H1.6 Q0.8 10.7 0.8 9.9 Z M6 0.7 V4.4 H9.7" stroke="#616161" stroke-width="1.25" fill="none" stroke-linejoin="round"/></svg>
<span style="left:156.6px;top:268px;font-family:'Liberation Sans';font-size:11.5px;line-height:14px;color:#424242;font-weight:normal;letter-spacing:0px;">AdvDiff.geo</span>
<span style="left:277.7px;top:268px;font-family:'Liberation Sans';font-size:11.5px;line-height:14px;color:#424242;font-weight:normal;letter-spacing:0px;">4m ago</span>
<svg style="left:140px;top:289.31px;" width="10.5" height="11.5" viewBox="0 0 10.5 11.5"><path d="M0.8 1.5 Q0.8 0.7 1.6 0.7 H6 L9.7 4.4 V9.9 Q9.7 10.7 8.9 10.7 H1.6 Q0.8 10.7 0.8 9.9 Z M6 0.7 V4.4 H9.7" stroke="#616161" stroke-width="1.25" fill="none" stroke-linejoin="round"/></svg>
<span style="left:156.6px;top:288px;font-family:'Liberation Sans';font-size:11.5px;line-height:14px;color:#424242;font-weight:normal;letter-spacing:0px;">AdvDiff.xml</span>
<span style="left:277.7px;top:288px;font-family:'Liberation Sans';font-size:11.5px;line-height:14px;color:#424242;font-weight:normal;letter-spacing:0px;">4m ago</span>
<svg style="left:140px;top:309.15000000000003px;" width="10.5" height="11.5" viewBox="0 0 10.5 11.5"><path d="M0.8 1.5 Q0.8 0.7 1.6 0.7 H6 L9.7 4.4 V9.9 Q9.7 10.7 8.9 10.7 H1.6 Q0.8 10.7 0.8 9.9 Z M6 0.7 V4.4 H9.7" stroke="#616161" stroke-width="1.25" fill="none" stroke-linejoin="round"/></svg>
<span style="left:156.6px;top:308px;font-family:'Liberation Sans';font-size:11.5px;line-height:14px;color:#424242;font-weight:normal;letter-spacing:0px;">advDiffErr.geo</span>
<span style="left:277.7px;top:308px;font-family:'Liberation Sans';font-size:11.5px;line-height:14px;color:#424242;font-weight:normal;letter-spacing:0px;">4m ago</span>
<svg style="left:140px;top:328.99px;" width="10.5" height="11.5" viewBox="0 0 10.5 11.5"><path d="M0.8 1.5 Q0.8 0.7 1.6 0.7 H6 L9.7 4.4 V9.9 Q9.7 10.7 8.9 10.7 H1.6 Q0.8 10.7 0.8 9.9 Z M6 0.7 V4.4 H9.7" stroke="#616161" stroke-width="1.25" fill="none" stroke-linejoin="round"/></svg>
<span style="left:156.6px;top:328px;font-family:'Liberation Sans';font-size:11.5px;line-height:14px;color:#424242;font-weight:normal;letter-spacing:0px;">advDiffErr.msh</span>
<span style="left:277.7px;top:328px;font-family:'Liberation Sans';font-size:11.5px;line-height:14px;color:#424242;font-weight:normal;letter-spacing:0px;">4m ago</span>
<svg style="left:140px;top:348.83000000000004px;" width="10.5" height="11.5" viewBox="0 0 10.5 11.5"><path d="M0.8 1.5 Q0.8 0.7 1.6 0.7 H6 L9.7 4.4 V9.9 Q9.7 10.7 8.9 10.7 H1.6 Q0.8 10.7 0.8 9.9 Z M6 0.7 V4.4 H9.7" stroke="#616161" stroke-width="1.25" fill="none" stroke-linejoin="round"/></svg>
<span style="left:156.6px;top:348px;font-family:'Liberation Sans';font-size:11.5px;line-height:14px;color:#424242;font-weight:normal;letter-spacing:0px;">advDiffSession-...</span>
<span style="left:277.7px;top:348px;font-family:'Liberation Sans';font-size:11.5px;line-height:14px;color:#424242;font-weight:normal;letter-spacing:0px;">4m ago</span>
<svg style="left:140px;top:368.67px;" width="10.5" height="11.5" viewBox="0 0 10.5 11.5"><path d="M0.8 1.5 Q0.8 0.7 1.6 0.7 H6 L9.7 4.4 V9.9 Q9.7 10.7 8.9 10.7 H1.6 Q0.8 10.7 0.8 9.9 Z M6 0.7 V4.4 H9.7" stroke="#616161" stroke-width="1.25" fill="none" stroke-linejoin="round"/></svg>
<span style="left:156.6px;top:367px;font-family:'Liberation Sans';font-size:11.5px;line-height:14px;color:#424242;font-weight:normal;letter-spacing:0px;">advDiffSession....</span>
<span style="left:277.7px;top:367px;font-family:'Liberation Sans';font-size:11.5px;line-height:14px;color:#424242;font-weight:normal;letter-spacing:0px;">4m ago</span>
<svg style="left:140px;top:388.51px;" width="10.5" height="11.5" viewBox="0 0 10.5 11.5"><path d="M0.8 1.5 Q0.8 0.7 1.6 0.7 H6 L9.7 4.4 V9.9 Q9.7 10.7 8.9 10.7 H1.6 Q0.8 10.7 0.8 9.9 Z M6 0.7 V4.4 H9.7" stroke="#616161" stroke-width="1.25" fill="none" stroke-linejoin="round"/></svg>
<span style="left:156.6px;top:387px;font-family:'Liberation Sans';font-size:11.5px;line-height:14px;color:#424242;font-weight:normal;letter-spacing:0px;">errorAnalysisSe...</span>
<span style="left:277.7px;top:387px;font-family:'Liberation Sans';font-size:11.5px;line-height:14px;color:#424242;font-weight:normal;letter-spacing:0px;">4m ago</span>
<svg style="left:140px;top:408.35px;" width="10.5" height="11.5" viewBox="0 0 10.5 11.5"><path d="M0.8 1.5 Q0.8 0.7 1.6 0.7 H6 L9.7 4.4 V9.9 Q9.7 10.7 8.9 10.7 H1.6 Q0.8 10.7 0.8 9.9 Z M6 0.7 V4.4 H9.7" stroke="#616161" stroke-width="1.25" fill="none" stroke-linejoin="round"/></svg>
<span style="left:156.6px;top:407px;font-family:'Liberation Sans';font-size:11.5px;line-height:14px;color:#424242;font-weight:normal;letter-spacing:0px;">exp2.xml</span>
<span style="left:277.7px;top:407px;font-family:'Liberation Sans';font-size:11.5px;line-height:14px;color:#424242;font-weight:normal;letter-spacing:0px;">4m ago</span>
<svg style="left:140px;top:428.19000000000005px;" width="10.5" height="11.5" viewBox="0 0 10.5 11.5"><path d="M0.8 1.5 Q0.8 0.7 1.6 0.7 H6 L9.7 4.4 V9.9 Q9.7 10.7 8.9 10.7 H1.6 Q0.8 10.7 0.8 9.9 Z M6 0.7 V4.4 H9.7" stroke="#616161" stroke-width="1.25" fill="none" stroke-linejoin="round"/></svg>
<span style="left:156.6px;top:427px;font-family:'Liberation Sans';font-size:11.5px;line-height:14px;color:#424242;font-weight:normal;letter-spacing:0px;">exp3.xml</span>
<span style="left:277.7px;top:427px;font-family:'Liberation Sans';font-size:11.5px;line-height:14px;color:#424242;font-weight:normal;letter-spacing:0px;">4m ago</span>
<svg style="left:140px;top:448.03px;" width="10.5" height="11.5" viewBox="0 0 10.5 11.5"><path d="M0.8 1.5 Q0.8 0.7 1.6 0.7 H6 L9.7 4.4 V9.9 Q9.7 10.7 8.9 10.7 H1.6 Q0.8 10.7 0.8 9.9 Z M6 0.7 V4.4 H9.7" stroke="#616161" stroke-width="1.25" fill="none" stroke-linejoin="round"/></svg>
<span style="left:156.6px;top:447px;font-family:'Liberation Sans';font-size:11.5px;line-height:14px;color:#424242;font-weight:normal;letter-spacing:0px;">exp4.xml</span>
<span style="left:277.7px;top:447px;font-family:'Liberation Sans';font-size:11.5px;line-height:14px;color:#424242;font-weight:normal;letter-spacing:0px;">4m ago</span>
<svg style="left:140px;top:467.87px;" width="10.5" height="11.5" viewBox="0 0 10.5 11.5"><path d="M0.8 1.5 Q0.8 0.7 1.6 0.7 H6 L9.7 4.4 V9.9 Q9.7 10.7 8.9 10.7 H1.6 Q0.8 10.7 0.8 9.9 Z M6 0.7 V4.4 H9.7" stroke="#616161" stroke-width="1.25" fill="none" stroke-linejoin="round"/></svg>
<span style="left:156.6px;top:467px;font-family:'Liberation Sans';font-size:11.5px;line-height:14px;color:#424242;font-weight:normal;letter-spacing:0px;">exp5.xml</span>
<span style="left:277.7px;top:467px;font-family:'Liberation Sans';font-size:11.5px;line-height:14px;color:#424242;font-weight:normal;letter-spacing:0px;">4m ago</span>
<svg style="left:140px;top:487.71000000000004px;" width="10.5" height="11.5" viewBox="0 0 10.5 11.5"><path d="M0.8 1.5 Q0.8 0.7 1.6 0.7 H6 L9.7 4.4 V9.9 Q9.7 10.7 8.9 10.7 H1.6 Q0.8 10.7 0.8 9.9 Z M6 0.7 V4.4 H9.7" stroke="#616161" stroke-width="1.25" fill="none" stroke-linejoin="round"/></svg>
<span style="left:156.6px;top:487px;font-family:'Liberation Sans';font-size:11.5px;line-height:14px;color:#424242;font-weight:normal;letter-spacing:0px;">exp6.xml</span>
<span style="left:277.7px;top:487px;font-family:'Liberation Sans';font-size:11.5px;line-height:14px;color:#424242;font-weight:normal;letter-spacing:0px;">4m ago</span>
<svg style="left:140px;top:507.55000000000007px;" width="10.5" height="11.5" viewBox="0 0 10.5 11.5"><path d="M0.8 1.5 Q0.8 0.7 1.6 0.7 H6 L9.7 4.4 V9.9 Q9.7 10.7 8.9 10.7 H1.6 Q0.8 10.7 0.8 9.9 Z M6 0.7 V4.4 H9.7" stroke="#616161" stroke-width="1.25" fill="none" stroke-linejoin="round"/></svg>
<span style="left:156.6px;top:506px;font-family:'Liberation Sans';font-size:11.5px;line-height:14px;color:#424242;font-weight:normal;letter-spacing:0px;">exp7.xml</span>
<span style="left:277.7px;top:506px;font-family:'Liberation Sans';font-size:11.5px;line-height:14px;color:#424242;font-weight:normal;letter-spacing:0px;">4m ago</span>
<svg style="left:140px;top:527.39px;" width="10.5" height="11.5" viewBox="0 0 10.5 11.5"><path d="M0.8 1.5 Q0.8 0.7 1.6 0.7 H6 L9.7 4.4 V9.9 Q9.7 10.7 8.9 10.7 H1.6 Q0.8 10.7 0.8 9.9 Z M6 0.7 V4.4 H9.7" stroke="#616161" stroke-width="1.25" fill="none" stroke-linejoin="round"/></svg>
<span style="left:156.6px;top:526px;font-family:'Liberation Sans';font-size:11.5px;line-height:14px;color:#424242;font-weight:normal;letter-spacing:0px;">exp8.xml</span>
<span style="left:277.7px;top:526px;font-family:'Liberation Sans';font-size:11.5px;line-height:14px;color:#424242;font-weight:normal;letter-spacing:0px;">4m ago</span>
<svg style="left:140px;top:547.23px;" width="10.5" height="11.5" viewBox="0 0 10.5 11.5"><path d="M0.8 1.5 Q0.8 0.7 1.6 0.7 H6 L9.7 4.4 V9.9 Q9.7 10.7 8.9 10.7 H1.6 Q0.8 10.7 0.8 9.9 Z M6 0.7 V4.4 H9.7" stroke="#616161" stroke-width="1.25" fill="none" stroke-linejoin="round"/></svg>
<span style="left:156.6px;top:546px;font-family:'Liberation Sans';font-size:11.5px;line-height:14px;color:#424242;font-weight:normal;letter-spacing:0px;">exp9.xml</span>
<span style="left:277.7px;top:546px;font-family:'Liberation Sans';font-size:11.5px;line-height:14px;color:#424242;font-weight:normal;letter-spacing:0px;">4m ago</span>
<svg style="left:140px;top:567.07px;" width="10.5" height="11.5" viewBox="0 0 10.5 11.5"><path d="M0.8 1.5 Q0.8 0.7 1.6 0.7 H6 L9.7 4.4 V9.9 Q9.7 10.7 8.9 10.7 H1.6 Q0.8 10.7 0.8 9.9 Z M6 0.7 V4.4 H9.7" stroke="#616161" stroke-width="1.25" fill="none" stroke-linejoin="round"/></svg>
<span style="left:156.6px;top:566px;font-family:'Liberation Sans';font-size:11.5px;line-height:14px;color:#424242;font-weight:normal;letter-spacing:0px;">exp10.xml</span>
<span style="left:277.7px;top:566px;font-family:'Liberation Sans';font-size:11.5px;line-height:14px;color:#424242;font-weight:normal;letter-spacing:0px;">4m ago</span>
<div style="left:102px;top:570px;width:913px;height:19.3px;background:#eeeeee;"></div>
<span style="left:124.4px;top:573px;font-family:'Liberation Sans';font-size:11.2px;line-height:14px;color:#424242;font-weight:normal;letter-spacing:0px;">Simple</span>
<div style="left:163.3px;top:573.5px;width:27px;height:12.5px;background:#bdbdbd;border-radius:7px;"></div>
<div style="left:164.8px;top:575px;width:9.5px;height:9.5px;background:#fff;border-radius:50%;"></div>
<span style="left:212px;top:573px;font-family:'Liberation Sans';font-size:11.2px;line-height:14px;color:#424242;font-weight:normal;letter-spacing:0px;">3</span>
<svg style="left:226.5px;top:573.5px;" width="12.5" height="12.5" viewBox="0 0 12.5 12.5"><rect x="2.2" y="2.2" width="8.1" height="8.1" rx="1.2" stroke="#616161" stroke-width="1.3" fill="none"/><rect x="4.4" y="4.4" width="3.7" height="3.7" fill="#616161"/><path d="M4.3 0.3 V2 M6.25 0.3 V2 M8.2 0.3 V2 M4.3 10.5 V12.2 M6.25 10.5 V12.2 M8.2 10.5 V12.2 M0.3 4.3 H2 M0.3 6.25 H2 M0.3 8.2 H2 M10.5 4.3 H12.2 M10.5 6.25 H12.2 M10.5 8.2 H12.2" stroke="#616161" stroke-width="1"/></svg>
<span style="left:256.5px;top:573px;font-family:'Liberation Sans';font-size:11.2px;line-height:14px;color:#424242;font-weight:normal;letter-spacing:0px;">Python 3 (ipykernel) | Idle</span>
<span style="left:680.6px;top:573px;font-family:'Liberation Sans';font-size:11.45px;line-height:14px;color:#424242;font-weight:normal;letter-spacing:0px;">Mode: Command</span>
<svg style="left:783.5px;top:573.5px;" width="12" height="12.5" viewBox="0 0 12 12.5"><path d="M6 0.8 L11 2.6 V6 C11 9 8.8 11 6 11.8 C3.2 11 1 9 1 6 V2.6 Z" stroke="#616161" stroke-width="1.2" fill="none"/><path d="M4 4.5 L8 8 M8 4.5 L4 8" stroke="#616161" stroke-width="1.2"/></svg>
<span style="left:810px;top:573px;font-family:'Liberation Sans';font-size:11.45px;line-height:14px;color:#424242;font-weight:normal;letter-spacing:0px;">Ln 1, Col 1</span>
<span style="left:877.6px;top:573px;font-family:'Liberation Sans';font-size:11.45px;line-height:14px;color:#424242;font-weight:normal;letter-spacing:0px;">adr-solver.ipynb</span>
<span style="left:972px;top:573px;font-family:'Liberation Sans';font-size:11.45px;line-height:14px;color:#424242;font-weight:normal;letter-spacing:0px;">0</span>
<svg style="left:986px;top:572.5px;" width="14" height="15" viewBox="0 0 14 15"><path d="M7 1.5 C4 1.5 3 4 3 6 V9.5 L1.3 11.8 H12.7 L11 9.5 V6 C11 4 10 1.5 7 1.5Z" stroke="#616161" stroke-width="1.3" fill="none" stroke-linejoin="round"/><path d="M5.3 13 A1.8 1.8 0 0 0 8.7 13" stroke="#616161" stroke-width="1.3" fill="none"/></svg>
<div style="left:989.7px;top:128px;width:25.5px;height:442px;background:#eeeeee;"></div>
<div style="left:989.7px;top:128px;width:0.8px;height:442px;background:#e0e0e0;"></div>
<svg style="left:995px;top:140.5px;" width="15" height="15" viewBox="0 0 15 15"><circle cx="3.8" cy="3.8" r="2" stroke="#616161" stroke-width="1.5" fill="none"/><circle cx="9.4" cy="9.8" r="4.6" stroke="#616161" stroke-width="2" stroke-dasharray="1.7 1.2" fill="none"/><circle cx="9.4" cy="9.8" r="2.8" stroke="#616161" stroke-width="2.2" fill="none"/></svg>
<svg style="left:996.5px;top:184.5px;" width="12" height="12" viewBox="0 0 12 12"><path d="M3 3.5 Q6 1 9 3.5 L10 5 H11.8 V6.3 H10.3 V7.5 H11.8 V8.8 H10.3 L9.8 10 Q6 12.8 2.2 10 L1.7 8.8 H0.2 V7.5 H1.7 V6.3 H0.2 V5 H2 Z" fill="#616161"/><path d="M3.2 0.5 L4.5 2.5 M8.8 0.5 L7.5 2.5" stroke="#616161" stroke-width="1.3"/><path d="M4 6 H8 M4 8.3 H8" stroke="#eee" stroke-width="0.9"/></svg>
<div style="left:332.5px;top:132px;width:169.5px;height:20.5px;background:#fff;"></div>
<div style="left:332.5px;top:132px;width:169.5px;height:2px;background:#1976d2;"></div>
<div style="left:502.8px;top:132.8px;width:18.8px;height:19px;background:#eeeeee;"></div>
<svg style="left:339px;top:137.5px;" width="10.5" height="10.5" viewBox="0 0 10.5 10.5"><rect x="0.5" y="0.5" width="9.5" height="9.5" fill="#fde6d4" stroke="#f37726" stroke-width="0.9"/><path d="M2.2 2.2 H8.3 V7.8 L5.25 5.8 L2.2 7.8Z" fill="#f37726"/></svg>
<span style="left:353.6px;top:135px;font-family:'Liberation Sans';font-size:11.6px;line-height:14px;color:#333;font-weight:normal;letter-spacing:0px;">adr-solver.ipynb</span>
<div style="left:485.6px;top:138.6px;width:8px;height:8px;background:#616161;border-radius:50%;"></div>
<svg style="left:506.5px;top:136.5px;" width="11" height="11" viewBox="0 0 11 11"><path d="M5.5 1 V10 M1 5.5 H10" stroke="#616161" stroke-width="1.3"/></svg>
<div style="left:332.5px;top:152px;width:651.8px;height:414px;background:#fff;"></div>
<div style="left:332.5px;top:176.8px;width:651.8px;height:0.9px;background:#e0e0e0;"></div>
<svg style="left:340.5px;top:159.5px;" width="11" height="11" viewBox="0 0 11 11"><path d="M0.5 1.3 Q0.5 0.5 1.3 0.5 H8 L10.5 3 V9.7 Q10.5 10.5 9.7 10.5 H1.3 Q0.5 10.5 0.5 9.7 Z" fill="#616161"/><rect x="2.3" y="1.8" width="5.5" height="2.6" fill="#fff"/><circle cx="5.5" cy="7.3" r="1.6" fill="#fff"/></svg>
<svg style="left:364.5px;top:160px;" width="9.5" height="9.5" viewBox="0 0 9.5 9.5"><path d="M4.75 0.5 V9 M0.5 4.75 H9" stroke="#616161" stroke-width="1.3"/></svg>
<svg style="left:386px;top:159px;" width="12" height="12" viewBox="0 0 12 12"><circle cx="2.8" cy="9.2" r="2" stroke="#616161" stroke-width="1.3" fill="none"/><circle cx="2.8" cy="2.8" r="2" stroke="#616161" stroke-width="1.3" fill="none"/><path d="M4.3 4.3 L11.5 11 M4.3 7.7 L11.5 1" stroke="#616161" stroke-width="1.3"/></svg>
<svg style="left:409px;top:159px;" width="11.5" height="12" viewBox="0 0 11.5 12"><rect x="0.6" y="0.6" width="7.3" height="8.8" rx="1" stroke="#616161" stroke-width="1.2" fill="none"/><rect x="3.4" y="2.8" width="7.5" height="8.7" rx="1" stroke="#616161" stroke-width="1.2" fill="#fff"/></svg>
<svg style="left:432.5px;top:158.5px;" width="11" height="12.5" viewBox="0 0 11 12.5"><rect x="0.7" y="1.8" width="9.6" height="10" rx="1.2" stroke="#616161" stroke-width="1.3" fill="none"/><rect x="3" y="0.4" width="5" height="2.8" rx="0.6" fill="#616161"/></svg>
<svg style="left:459px;top:161px;" width="6" height="8" viewBox="0 0 6 8"><path d="M0.3 0.3 L5.7 4 L0.3 7.7Z" fill="#616161"/></svg>
<div style="left:480.3px;top:161px;width:7.5px;height:7.5px;background:#616161;"></div>
<svg style="left:501.5px;top:159px;" width="11" height="11" viewBox="0 0 11 11"><path d="M9.7 5.9 A4.2 4.2 0 1 1 7.6 1.86" stroke="#616161" stroke-width="1.3" fill="none"/><path d="M6.6 0.1 H10.6 V4.1Z" fill="#616161"/></svg>
<svg style="left:525px;top:161.5px;" width="10.5" height="7" viewBox="0 0 10.5 7"><path d="M0.3 0.3 L4.8 3.5 L0.3 6.7Z M5.5 0.3 L10 3.5 L5.5 6.7Z" fill="#616161"/></svg>
<span style="left:550.6px;top:158px;font-family:'Liberation Sans';font-size:11.5px;line-height:14px;color:#333;font-weight:normal;letter-spacing:0px;">Markdown</span>
<svg style="left:611.5px;top:162px;" width="8.5" height="6" viewBox="0 0 8.5 6"><path d="M0.7 0.7 L4.25 4.5 L7.8 0.7" stroke="#616161" stroke-width="1.3" fill="none"/></svg>
<svg style="left:837.5px;top:159.5px;" width="10" height="11" viewBox="0 0 10 11"><path d="M2.5 3.2 Q5 1 7.5 3.2 L8.3 4.5 H9.8 V5.6 H8.6 V6.6 H9.8 V7.7 H8.6 L8.2 8.8 Q5 11.3 1.8 8.8 L1.4 7.7 H0.2 V6.6 H1.4 V5.6 H0.2 V4.5 H1.7 Z" fill="#616161"/><path d="M2.7 0.5 L3.8 2.2 M7.3 0.5 L6.2 2.2" stroke="#616161" stroke-width="1.1"/><path d="M3.3 5.3 H6.7 M3.3 7.3 H6.7" stroke="#fff" stroke-width="0.8"/></svg>
<span style="left:858.8px;top:156px;font-family:'Liberation Sans';font-size:11.7px;line-height:15px;color:#333;font-weight:normal;letter-spacing:0px;">Python 3 (ipykernel)</span>
<div style="left:967.8px;top:159.3px;width:12px;height:12px;border:1.2px solid #333;border-radius:50%;"></div>
<div style="left:332.5px;top:565px;width:651.8px;height:5px;background:#bdbdbd;"></div>
<div style="left:0;top:0;width:1024px;height:700px;clip-path:inset(177.7px 40px 135px 332px);">
<div style="left:344.4px;top:189.4px;width:6.2px;height:80.3px;background:#1976d2;border-radius:2px;"></div>
<div style="left:401.25px;top:189.1px;width:571.2px;height:80.6px;border:1px solid #e0e0e0;background:#fff;"></div>
<svg style="left:384.5px;top:211.5px;" width="9.5" height="6" viewBox="0 0 9.5 6"><path d="M0.5 0.5 H9 L4.75 5.2Z" fill="#616161"/></svg>
<span style="left:406.9px;top:199px;font-family:'Liberation Sans';font-size:25.6px;line-height:32px;color:#333;font-weight:normal;letter-spacing:0.0453px;">1. Preliminaries</span>
<span style="left:406.9px;top:246px;font-family:'Liberation Sans';font-size:12.66px;line-height:16px;color:#444;font-weight:normal;letter-spacing:0.0176px;">Run the following cell to ensure that all packages are available for the tutorial</span>
<svg style="left:838.5px;top:195.5px;" width="11.5" height="12" viewBox="0 0 11.5 12"><rect x="0.7" y="0.7" width="7.2" height="8.6" rx="0.8" stroke="#616161" stroke-width="1.3" fill="none"/><rect x="3" y="2.8" width="7.8" height="8.5" rx="0.8" stroke="#616161" stroke-width="1.3" fill="#fff"/><path d="M6.9 4.9 V9.2 M4.75 7.05 H9.05" stroke="#616161" stroke-width="1.1"/></svg>
<svg style="left:861.5px;top:195.5px;" width="11" height="12" viewBox="0 0 11 12"><path d="M5.5 11.5 V1.3 M1 5.8 L5.5 1.3 L10 5.8" stroke="#bdbdbd" stroke-width="1.6" fill="none"/></svg>
<svg style="left:884.5px;top:195.5px;" width="11" height="12" viewBox="0 0 11 12"><path d="M5.5 0.5 V10.7 M1 6.2 L5.5 10.7 L10 6.2" stroke="#616161" stroke-width="1.6" fill="none"/></svg>
<svg style="left:907px;top:196px;" width="12.5" height="11" viewBox="0 0 12.5 11"><rect x="1.2" y="6.5" width="10.4" height="4" rx="0.6" stroke="#616161" stroke-width="1.3" fill="none"/><path d="M6.4 0.6 V4.6 M4.4 2.6 H8.4" stroke="#616161" stroke-width="1.4"/></svg>
<svg style="left:930.5px;top:196px;" width="12" height="11.5" viewBox="0 0 12 11.5"><rect x="0.8" y="0.8" width="10.2" height="3.8" rx="0.6" stroke="#616161" stroke-width="1.3" fill="none"/><path d="M5.9 5.5 V10.8 M3.9 8.4 H7.9" stroke="#616161" stroke-width="1.4"/></svg>
<svg style="left:955px;top:196.3px;" width="8" height="10.5" viewBox="0 0 8 10.5"><rect x="0" y="0.8" width="8" height="1.3" fill="#616161"/><rect x="2.6" y="0" width="2.8" height="1.2" fill="#616161"/><path d="M0.7 2.6 H7.3 V9.6 Q7.3 10.3 6.6 10.3 H1.4 Q0.7 10.3 0.7 9.6 Z" fill="#616161"/></svg>
<span style="left:373px;top:284px;font-family:'Liberation Mono';font-size:10.3px;line-height:13px;color:#9e9e9e;font-weight:normal;letter-spacing:0.5px;">[ ]:</span>
<div style="left:401.25px;top:277.4px;width:571.2px;height:36px;border:1px solid #e0e0e0;background:#f5f5f5;"></div>
<span style="left:406.9px;top:284px;font-family:'Liberation Mono';font-size:10.3px;line-height:13px;color:#333;font-weight:normal;letter-spacing:0px;">%pip install numpy</span>
<span style="left:406.9px;top:298px;font-family:'Liberation Mono';font-size:10.3px;line-height:13px;color:#333;font-weight:normal;letter-spacing:0px;">%pip install pyvista</span>
<span style="left:406.9px;top:332px;font-family:'Liberation Sans';font-size:25.6px;line-height:32px;color:#333;font-weight:normal;letter-spacing:0.0649px;">2. Learning Objectives</span>
<span style="left:406.9px;top:380px;font-family:'Liberation Sans';font-size:12.66px;line-height:16px;color:#444;font-weight:normal;letter-spacing:0.0034px;">Welcome to the tutorial on the Advection-Diffusion-Reaction (ADR) solver in the Nektar++</span>
<span style="left:406.9px;top:398px;font-family:'Liberation Sans';font-size:12.66px;line-height:16px;color:#444;font-weight:normal;letter-spacing:0.0408px;">framework. This tutorial is aimed to show the main features of the <span style="position:static;font-family:'Liberation Mono';font-size:11.3px;background:#eeeeee;padding:2px 3px 0 3px;letter-spacing:0;border-radius:1px;">ADRSolver</span> in a simple</span>
<span style="left:406.9px;top:415px;font-family:'Liberation Sans';font-size:12.66px;line-height:16px;color:#444;font-weight:normal;letter-spacing:0.0894px;">manner. After the completion of this tutorial, you will be familiar with:</span>
<div style="left:419.5px;top:450.1px;width:4.2px;height:4.2px;background:#333;border-radius:50%;"></div>
<span style="left:428.75px;top:444px;font-family:'Liberation Sans';font-size:12.66px;line-height:16px;color:#444;font-weight:normal;letter-spacing:0.0459px;">the generation of a simple mesh in Gmsh and its conversion into a Nektar++ compatible</span>
<span style="left:428.75px;top:462px;font-family:'Liberation Sans';font-size:12.66px;line-height:16px;color:#444;font-weight:normal;letter-spacing:0.0799px;">format;</span>
<div style="left:419.5px;top:486.1px;width:4.2px;height:4.2px;background:#333;border-radius:50%;"></div>
<span style="left:428.75px;top:480px;font-family:'Liberation Sans';font-size:12.66px;line-height:16px;color:#444;font-weight:normal;letter-spacing:-0.0392px;">the visualisation of the mesh in Paraview or VisIt</span>
<div style="left:419.5px;top:504.2px;width:4.2px;height:4.2px;background:#333;border-radius:50%;"></div>
<span style="left:428.75px;top:498px;font-family:'Liberation Sans';font-size:12.66px;line-height:16px;color:#444;font-weight:normal;letter-spacing:0.0514px;">the setup of the initial and boundary conditions, the parameters and the solver settings;</span>
<div style="left:419.5px;top:522.9px;width:4.2px;height:4.2px;background:#333;border-radius:50%;"></div>
<span style="left:428.75px;top:517px;font-family:'Liberation Sans';font-size:12.66px;line-height:16px;color:#444;font-weight:normal;letter-spacing:0.0672px;">running a simulation with the <span style="position:static;font-family:'Liberation Mono';font-size:11.3px;background:#eeeeee;padding:2px 3px 0 3px;letter-spacing:0;border-radius:1px;">ADRSolver</span>; and</span>
<div style="left:419.5px;top:541.7px;width:4.2px;height:4.2px;background:#333;border-radius:50%;"></div>
<span style="left:428.75px;top:536px;font-family:'Liberation Sans';font-size:12.66px;line-height:16px;color:#444;font-weight:normal;letter-spacing:0.0167px;">the post-processing of the data for a convergence plot and the visualisation of the results in</span>
<span style="left:428.75px;top:553px;font-family:'Liberation Sans';font-size:12.66px;line-height:16px;color:#444;font-weight:normal;letter-spacing:0px;">Paraview or VisIt.</span>
</div>
</body></html>
